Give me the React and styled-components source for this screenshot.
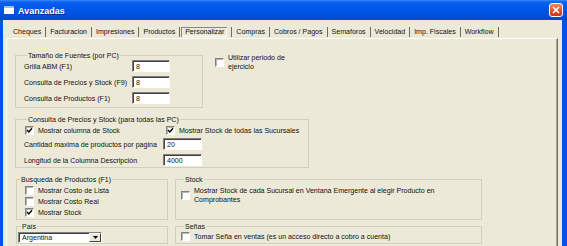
import React from 'react';
import styled, { createGlobalStyle } from 'styled-components';

const GlobalStyle = createGlobalStyle`
	html, body {
		margin: 0;
		padding: 0;
		background: #ECE9D8;
	}
	body {
		font-family: "Liberation Sans", Arial, sans-serif;
		font-size: 7.05px;
		color: #111;
	}
`;

const Window = styled.div`
	width: 567px;
	height: 246px;
	display: flex;
	flex-direction: column;
	overflow: hidden;
	background: #ECE9D8;
`;
const TitleBar = styled.div`
	flex: none;
	height: 20px;
	display: flex;
	align-items: center;
	gap: 4px;
	padding: 0 4px;
	box-sizing: border-box;
	background: linear-gradient(to bottom, #3d8cf9 0px, #0c62ee 2px, #0058ea 7px, #0052e0 14px, #0049cf 20px);
`;
const Title = styled.span`
	font-family: "Liberation Sans", Arial, sans-serif;
	font-weight: bold;
	font-size: 9px;
	color: #fff;
	text-shadow: 1px 1px 0 #0a2a8a;
	margin-top: 1px;
`;
const CloseButton = styled.div`
	margin-left: auto;
	width: 14px;
	height: 14px;
	box-sizing: border-box;
	border: 1px solid #fff;
	border-radius: 3px;
	background: linear-gradient(to bottom, #ec8a66, #d8461f 70%, #c9381a);
	display: flex;
	align-items: center;
	justify-content: center;
`;
const Frame = styled.div`
	flex: 1;
	display: flex;
	flex-direction: column;
	border-left: 3px solid #0055e5;
	border-right: 5px solid #0055e5;
	padding: 0 4px 0 3px;
	min-height: 0;
`;
const TabStrip = styled.div`
	display: flex;
	align-items: center;
	margin-top: 7px;
	height: 10px;
	padding-left: 3px;
`;
const Tab = styled.span`
	line-height: 10px;
	padding: 0 4px;
	border-right: 1px solid #6f6d62;
	white-space: nowrap;
`;
const ActiveLabel = styled.span`
	display: inline-block;
	padding: 0 3px 0 4px;
	margin-left: -3px;
	box-shadow: inset 1px 1px #8a887c, inset -1px -1px #fff;
`;
const Panel = styled.div`
	flex: 1;
	margin-top: 1px;
	border-top: 1px solid #fff;
	border-left: 1px solid #fff;
	border-right: 1px solid #716f64;
	box-shadow: inset -1px 0 #aca899;
	padding: 12px 0 0 8px;
	display: flex;
	flex-direction: column;
	align-items: flex-start;
`;
const TopRow = styled.div`
	display: flex;
	align-items: flex-start;
	gap: 12px;
`;
const Group = styled.fieldset`
	margin: 0;
	padding: 0 0 ${p => p.$pb || 0}px ${p => p.$pl ?? 8}px;
	border: 1px solid #d0d0bf;
	width: ${p => p.$w ? `${p.$w}px` : 'auto'};
	box-sizing: border-box;
	min-inline-size: 0;
`;
const Legend = styled.legend`
	margin-left: 3px;
	padding: 0 1px;
	line-height: 9px;
	font-size: 7.05px;
`;
const FieldRows = styled.div`
	display: flex;
	flex-direction: column;
	gap: ${p => p.$gap}px;
	padding-top: ${p => p.$pt || 0}px;
`;
const FieldRow = styled.div`
	display: grid;
	grid-template-columns: ${p => p.$label}px ${p => p.$input}px;
	align-items: center;
	height: 12px;
`;
const Input = styled.div`
	height: 12px;
	box-sizing: border-box;
	background: #fff;
	border: 1px solid;
	border-color: #7f7f7f #fff #fff #7f7f7f;
	box-shadow: inset 1px 1px #404040;
	padding: 1px 0 0 3px;
	line-height: 9px;
`;
const CheckRow = styled.div`
	display: grid;
	grid-template-columns: ${p => p.$col}px auto;
	height: 10px;
	align-items: center;
`;
const Option = styled.label`
	display: flex;
	align-items: center;
	gap: 4px;
	line-height: 9px;
	margin-left: ${p => p.$ml || 0}px;
	margin-top: ${p => p.$mt || 0}px;
`;
const OptionText = styled.span`
	width: ${p => p.$w ? `${p.$w}px` : 'auto'};
`;
const Box = styled.span`
	flex: none;
	width: 9px;
	height: 9px;
	box-sizing: border-box;
	background: #fff;
	border: 1px solid;
	border-color: #808080 #fff #fff #808080;
	box-shadow: inset 1px 1px #b8b6aa;
	display: flex;
	align-items: center;
	justify-content: center;
`;
const OptionList = styled.div`
	display: flex;
	flex-direction: column;
	gap: 1px;
	padding-top: 1px;
	padding-left: 8px;
`;
const ListOption = styled(Option)`
	height: 10px;
`;
const BottomGrid = styled.div`
	display: grid;
	grid-template-columns: 152px 307px;
	column-gap: 7px;
	row-gap: 2px;
	margin-left: 1px;
	margin-top: 7px;
`;
const Select = styled.div`
	width: 84px;
	height: 11px;
	box-sizing: border-box;
	margin-top: 1px;
	background: #fff;
	border: 1px solid;
	border-color: #7f7f7f #fff #fff #7f7f7f;
	box-shadow: inset 1px 1px #404040;
	display: flex;
	align-items: stretch;
`;
const SelectValue = styled.span`
	flex: 1;
	padding-left: 3px;
	line-height: 9px;
`;
const DropButton = styled.span`
	width: 12px;
	box-sizing: border-box;
	background: #ECE9D8;
	border: 1px solid;
	border-color: #fff #404040 #404040 #fff;
	display: flex;
	align-items: center;
	justify-content: center;
`;

const tabs = ['Cheques', 'Facturacion', 'Impresiones', 'Productos', 'Personalizar', 'Compras', 'Cobros / Pagos', 'Semaforos', 'Velocidad', 'Imp. Fiscales', 'Workflow'];

const Check = ({ checked }) => (
	<Box>
		{checked && (
			<svg width="7" height="7" viewBox="0 0 7 7">
				<path d="M1 3 L2.8 5 L6 1.2" fill="none" stroke="#000" strokeWidth="1.4" />
			</svg>
		)}
	</Box>
);

const CheckOption = ({ checked, children, ...rest }) => (
	<Option {...rest}>
		<Check checked={checked} />
		{children}
	</Option>
);

export default function App() {
	return (
		<Window>
			<GlobalStyle />
			<TitleBar>
				<svg width="10" height="8" viewBox="0 0 10 8">
					<rect x="0" y="0" width="10" height="8" fill="#fff" />
					<rect x="0" y="0" width="10" height="2" fill="#9cc0f5" />
				</svg>
				<Title>Avanzadas</Title>
				<CloseButton>
					<svg width="8" height="8" viewBox="0 0 8 8">
						<path d="M1 1 L7 7 M7 1 L1 7" stroke="#fff" strokeWidth="1.6" />
					</svg>
				</CloseButton>
			</TitleBar>
			<Frame>
				<TabStrip>
					{tabs.map(t => (
						<Tab key={t}>
							{t === 'Personalizar' ? <ActiveLabel>{t}</ActiveLabel> : t}
						</Tab>
					))}
				</TabStrip>
				<Panel>
					<TopRow>
						<Group $w={188} $pb={3}>
							<Legend>Tamaño de Fuentes (por PC)</Legend>
							<FieldRows $gap={4}>
								<FieldRow $label={108} $input={38}>
									<span>Grilla ABM (F1)</span>
									<Input>8</Input>
								</FieldRow>
								<FieldRow $label={108} $input={38}>
									<span>Consulta de Precios y Stock (F9)</span>
									<Input>8</Input>
								</FieldRow>
								<FieldRow $label={108} $input={38}>
									<span>Consulta de Productos (F1)</span>
									<Input>8</Input>
								</FieldRow>
							</FieldRows>
						</Group>
						<CheckOption $mt={2}>
							<OptionText $w={62}>Utilizar periodo de ejercicio</OptionText>
						</CheckOption>
					</TopRow>

					<Group $w={294} $pb={1} style={{ marginTop: 7 }}>
						<Legend>Consulta de Precios y Stock (para todas las PC)</Legend>
						<FieldRows $gap={3} $pt={1}>
							<CheckRow $col={142}>
								<CheckOption checked $ml={1}>Mostrar columna de Stock</CheckOption>
								<CheckOption checked>Mostrar Stock de todas las Sucursales</CheckOption>
							</CheckRow>
							<FieldRow $label={139} $input={39}>
								<span>Cantidad maxima de productos por pagina</span>
								<Input>20</Input>
							</FieldRow>
							<FieldRow $label={139} $input={39} style={{ marginTop: 1 }}>
								<span>Longitud de la Columna Descripción</span>
								<Input>4000</Input>
							</FieldRow>
						</FieldRows>
					</Group>

					<BottomGrid>
						<Group $pl={0} $pb={2}>
							<Legend>Busqueda de Productos (F1)</Legend>
							<OptionList>
								<ListOption as="label">
									<Check />Mostrar Costo de Lista
								</ListOption>
								<ListOption as="label">
									<Check />Mostrar Costo Real
								</ListOption>
								<ListOption as="label">
									<Check checked />Mostrar Stock
								</ListOption>
							</OptionList>
						</Group>
						<Group $pl={5}>
							<Legend>Stock</Legend>
							<CheckOption $mt={2}>
								<OptionText $w={262}>Mostrar Stock de cada Sucursal en Ventana Emergente al elegir Producto en Comprobantes</OptionText>
							</CheckOption>
						</Group>
						<Group $pl={1}>
							<Legend>País</Legend>
							<Select>
								<SelectValue>Argentina</SelectValue>
								<DropButton>
									<svg width="5" height="3" viewBox="0 0 5 3">
										<path d="M0 0 L5 0 L2.5 3 Z" fill="#000" />
									</svg>
								</DropButton>
							</Select>
						</Group>
						<Group $pl={5}>
							<Legend>Señas</Legend>
							<CheckOption $mt={1}>Tomar Seña en ventas (es un acceso directo a cobro a cuenta)</CheckOption>
						</Group>
					</BottomGrid>
				</Panel>
			</Frame>
		</Window>
	);
}
